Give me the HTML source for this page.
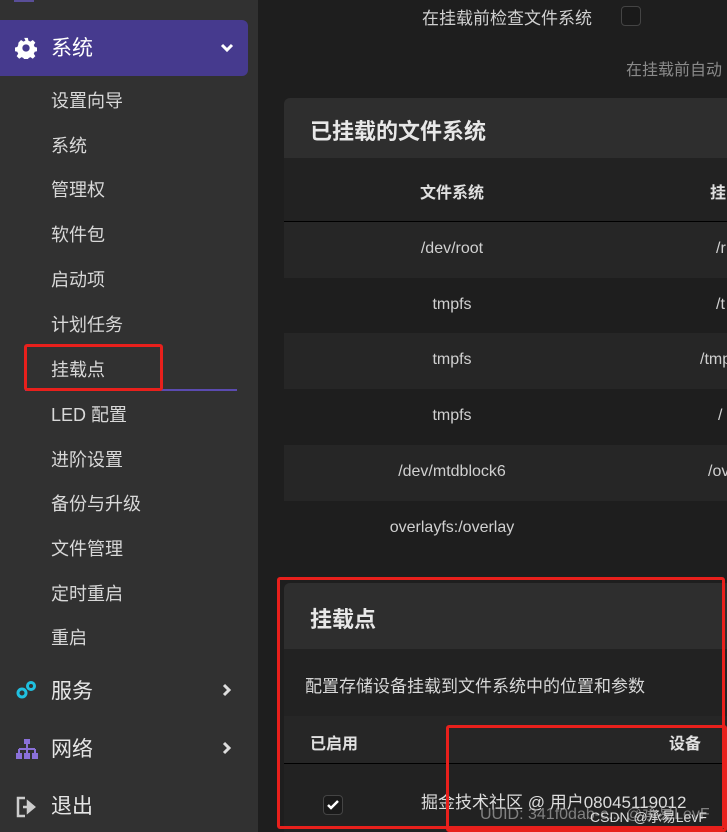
<!DOCTYPE html>
<html><head><meta charset="utf-8"><style>
*{margin:0;padding:0;box-sizing:border-box}
body{width:727px;height:832px;overflow:hidden;background:#1e1e1e;font-family:"Liberation Sans","Noto Sans CJK SC",sans-serif;position:relative;color:#ddd}
.side{position:absolute;left:0;top:0;width:258px;height:832px;background:#313131}
.abs{position:absolute;white-space:nowrap}
.sub{position:absolute;left:51px;font-size:18px;color:#d8d8d8;line-height:20px}
.big{position:absolute;left:51px;font-size:21px;color:#e6e6e6;line-height:24px}
.row{position:absolute;left:284px;width:443px;height:56px}
.cell{position:absolute;left:0;width:336px;text-align:center;font-size:16px;color:#d0d0d0}
.red{position:absolute;border:3px solid #e8201c;border-radius:3px}
</style></head><body>
<div class="side">
  <div class="abs" style="left:14px;top:-12px;width:20px;height:14px;background:#6b5bc4;opacity:.7"></div>
  <div class="abs" style="left:0;top:20px;width:248px;height:56px;background:#463a8e;border-radius:0 6px 6px 0"></div>
  <svg class="abs" style="left:15px;top:37px" width="22" height="22" viewBox="0 0 24 24"><path fill="#fff" d="M10 1h4l.6 3 2.2 1 2.6-1.7 2.8 2.8-1.7 2.6 1 2.2 3 .6v4l-3 .6-1 2.2 1.7 2.6-2.8 2.8-2.6-1.7-2.2 1-.6 3h-4l-.6-3-2.2-1-2.6 1.7-2.8-2.8 1.7-2.6-1-2.2-3-.6v-4l3-.6 1-2.2L3.8 6.1l2.8-2.8 2.6 1.7 2.2-1zM12 8a4 4 0 100 8 4 4 0 000-8z"/></svg>
  <div class="big" style="top:37px;color:#fff">系统</div>
  <svg class="abs" style="left:220px;top:42px" width="14" height="12" viewBox="0 0 14 12"><path d="M2 3l5 5 5-5" stroke="#fff" stroke-width="3" fill="none"/></svg>
  <div class="sub" style="top:91px">设置向导</div>
  <div class="sub" style="top:136px">系统</div>
  <div class="sub" style="top:180px">管理权</div>
  <div class="sub" style="top:225px">软件包</div>
  <div class="sub" style="top:270px">启动项</div>
  <div class="sub" style="top:315px">计划任务</div>
  <div class="sub" style="top:360px">挂载点</div>
  <div class="abs" style="left:25px;top:389px;width:212px;height:2px;background:#5b4bb0"></div>
  <div class="sub" style="top:405px">LED 配置</div>
  <div class="sub" style="top:450px">进阶设置</div>
  <div class="sub" style="top:494px">备份与升级</div>
  <div class="sub" style="top:539px">文件管理</div>
  <div class="sub" style="top:584px">定时重启</div>
  <div class="sub" style="top:628px">重启</div>
  <div class="red" style="left:24px;top:344px;width:139px;height:47px"></div>
  <svg class="abs" style="left:16px;top:680px" width="22" height="20" viewBox="0 0 22 20"><circle cx="6" cy="13" r="4" fill="none" stroke="#20c0e0" stroke-width="3"/><circle cx="15" cy="6" r="3.5" fill="none" stroke="#20c0e0" stroke-width="3"/></svg>
  <div class="big" style="top:680px">服务</div>
  <svg class="abs" style="left:222px;top:683px" width="10" height="14" viewBox="0 0 10 14"><path d="M2 2l5 5-5 5" stroke="#ddd" stroke-width="3" fill="none"/></svg>
  <svg class="abs" style="left:16px;top:738px" width="22" height="22" viewBox="0 0 22 22"><rect x="8" y="1" width="6" height="5" fill="#8a70d8"/><path d="M11 6v5M3 11h16M3 11v5M11 11v5M19 11v5" stroke="#8a70d8" stroke-width="2" fill="none"/><rect x="0" y="15" width="6" height="6" fill="#8a70d8"/><rect x="8" y="15" width="6" height="6" fill="#8a70d8"/><rect x="16" y="15" width="6" height="6" fill="#8a70d8"/></svg>
  <div class="big" style="top:738px">网络</div>
  <svg class="abs" style="left:222px;top:741px" width="10" height="14" viewBox="0 0 10 14"><path d="M2 2l5 5-5 5" stroke="#ddd" stroke-width="3" fill="none"/></svg>
  <svg class="abs" style="left:16px;top:796px" width="22" height="22" viewBox="0 0 22 22"><path d="M9 2H2v18h7" stroke="#ccc" stroke-width="2.5" fill="none"/><path d="M7 11h8M12 6l6 5-6 5z" stroke="#ccc" stroke-width="2.5" fill="#ccc"/></svg>
  <div class="big" style="top:795px">退出</div>
</div>

<div class="abs" style="left:422px;top:4px;font-size:17px;color:#d0d0d0">在挂载前检查文件系统</div>
<div class="abs" style="left:621px;top:6px;width:20px;height:20px;border:1px solid #444;border-radius:4px;background:#1a1a1a"></div>
<div class="abs" style="left:626px;top:56px;font-size:16px;color:#8a8a8a">在挂载前自动</div>

<div class="abs" style="left:284px;top:98px;width:443px;height:60px;background:#2e2e2e;border-radius:6px 0 0 0"></div>
<div class="abs" style="left:310px;top:114px;font-size:22px;font-weight:bold;color:#e8e8e8">已挂载的文件系统</div>
<div class="abs" style="left:284px;top:158px;width:443px;height:63px;background:#222"></div>
<div class="cell abs" style="left:284px;top:179px;font-weight:bold;color:#e0e0e0">文件系统</div>
<div class="abs" style="left:710px;top:179px;font-size:16px;font-weight:bold;color:#e0e0e0">挂</div>
<div class="abs" style="left:284px;top:221px;width:443px;height:1px;background:#000"></div>
<div class="row" style="top:222px;background:#262626"></div>
<div class="row" style="top:333px;background:#262626"></div>
<div class="row" style="top:445px;background:#262626"></div>
<div class="cell abs" style="left:284px;top:240px">/dev/root</div><div class="abs" style="left:716px;top:240px;font-size:16px;color:#d0d0d0">/r</div>
<div class="cell abs" style="left:284px;top:296px">tmpfs</div><div class="abs" style="left:716px;top:296px;font-size:16px;color:#d0d0d0">/t</div>
<div class="cell abs" style="left:284px;top:351px">tmpfs</div><div class="abs" style="left:700px;top:351px;font-size:16px;color:#d0d0d0">/tmp</div>
<div class="cell abs" style="left:284px;top:407px">tmpfs</div><div class="abs" style="left:718px;top:407px;font-size:16px;color:#d0d0d0">/</div>
<div class="cell abs" style="left:284px;top:463px">/dev/mtdblock6</div><div class="abs" style="left:708px;top:463px;font-size:16px;color:#d0d0d0">/ov</div>
<div class="cell abs" style="left:284px;top:519px">overlayfs:/overlay</div>

<div class="abs" style="left:284px;top:583px;width:443px;height:66px;background:#2e2e2e;border-radius:6px 0 0 0"></div>
<div class="abs" style="left:310px;top:602px;font-size:22px;font-weight:bold;color:#e8e8e8">挂载点</div>
<div class="abs" style="left:284px;top:649px;width:443px;height:183px;background:#222"></div>
<div class="abs" style="left:305px;top:672px;font-size:17px;color:#d8d8d8">配置存储设备挂载到文件系统中的位置和参数</div>
<div class="abs" style="left:284px;top:716px;width:443px;height:47px;background:#262626"></div>
<div class="abs" style="left:310px;top:730px;font-size:16px;font-weight:bold;color:#e0e0e0">已启用</div>
<div class="abs" style="left:669px;top:730px;font-size:16px;font-weight:bold;color:#e0e0e0">设备</div>
<div class="abs" style="left:284px;top:763px;width:443px;height:1px;background:#000"></div>
<div class="abs" style="left:323px;top:795px;width:20px;height:20px;border-radius:4px;background:#1a1a1a;border:1px solid #444"></div>
<svg class="abs" style="left:326px;top:798px" width="14" height="14" viewBox="0 0 14 14"><path d="M2 7l3 3 7-7" stroke="#fff" stroke-width="2.5" fill="none"/></svg>
<div class="abs" style="left:421px;top:788px;font-size:17px;color:#ddd">掘金技术社区 @ 用户08045119012</div>
<div class="abs" style="left:480px;top:800px;font-size:16px;color:#aaa;opacity:.7">UUID: 341f0dab-c... @承易LevF</div>
<div class="abs" style="left:590px;top:807px;font-size:14px;color:#ddd">CSDN @承易LevF</div>

<div class="red" style="left:277px;top:577px;width:448px;height:252px"></div>
<div class="red" style="left:446px;top:725px;width:281px;height:107px"></div>
</body></html>
